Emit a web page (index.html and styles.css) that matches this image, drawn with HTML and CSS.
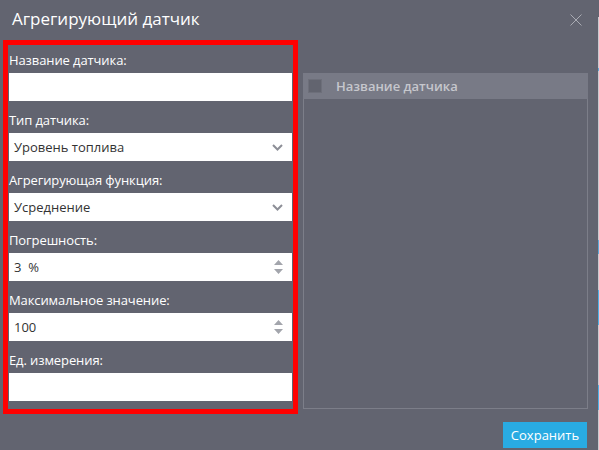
FILE: index.html
```html
<!DOCTYPE html>
<html lang="ru">
<head>
<meta charset="utf-8">
<link rel="stylesheet" href="styles.css">
</head>
<body>
<div class="page">
  <div class="modal">
    <div class="modal-header">
      <h1 class="modal-title">Агрегирующий датчик</h1>
      <span class="close">
        <svg width="12" height="12" viewBox="0 0 12 12"><path d="M0.5 0.5 L11.5 11.5 M11.5 0.5 L0.5 11.5" stroke="#a9abb3" stroke-width="1" fill="none"/></svg>
      </span>
    </div>
    <div class="modal-body">
      <div class="form-box">
        <div class="field">
          <label class="label">Название датчика:</label>
          <div class="input"></div>
        </div>
        <div class="field">
          <label class="label">Тип датчика:</label>
          <div class="input select"><span>Уровень топлива</span>
            <svg class="chev" width="11" height="7" viewBox="0 0 11 7"><path d="M1 1 L5.5 5.5 L10 1" stroke="#8d8f97" stroke-width="2" fill="none"/></svg>
          </div>
        </div>
        <div class="field">
          <label class="label">Агрегирующая функция:</label>
          <div class="input select"><span>Усреднение</span>
            <svg class="chev" width="11" height="7" viewBox="0 0 11 7"><path d="M1 1 L5.5 5.5 L10 1" stroke="#8d8f97" stroke-width="2" fill="none"/></svg>
          </div>
        </div>
        <div class="field">
          <label class="label">Погрешность:</label>
          <div class="input number"><span>3&nbsp;&nbsp;%</span>
            <svg class="spin" width="9" height="14" viewBox="0 0 9 14"><path d="M4.5 0 L9 5 L0 5 Z M0 9 L9 9 L4.5 14 Z" fill="#a3a5ac"/></svg>
          </div>
        </div>
        <div class="field">
          <label class="label">Максимальное значение:</label>
          <div class="input number"><span>100</span>
            <svg class="spin" width="9" height="14" viewBox="0 0 9 14"><path d="M4.5 0 L9 5 L0 5 Z M0 9 L9 9 L4.5 14 Z" fill="#a3a5ac"/></svg>
          </div>
        </div>
        <div class="field">
          <label class="label">Ед. измерения:</label>
          <div class="input"></div>
        </div>
      </div>
      <div class="list-panel">
        <div class="list-header">
          <span class="checkbox"></span>
          <span class="list-title">Название датчика</span>
        </div>
      </div>
    </div>
    <div class="modal-footer">
      <button class="btn-save">Сохранить</button>
    </div>
  </div>
  <div class="edge"></div>
</div>
</body>
</html>
```

FILE: styles.css
```css
* { box-sizing: border-box; }
html, body { margin: 0; padding: 0; }
body {
  font-family: "Open Sans", "Liberation Sans", sans-serif;
  background: #626470;
  width: 599px;
  height: 450px;
  overflow: hidden;
}
.page {
  display: flex;
  width: 599px;
  height: 450px;
}
.modal {
  width: 598px;
  height: 450px;
  background: #626470;
  display: flex;
  flex-direction: column;
}
.edge {
  width: 1px;
  height: 450px;
  background: linear-gradient(to bottom,
    #626470 0, #626470 17px,
    #c9cacf 17px, #c9cacf 68px,
    #5fa9d8 68px, #5fa9d8 71px,
    #c9cacf 71px, #c9cacf 240px,
    #5fa9d8 240px, #5fa9d8 254px,
    #c9cacf 254px, #c9cacf 290px,
    #4fb1e6 290px, #4fb1e6 325px,
    #c9cacf 325px, #c9cacf 385px,
    #4fb1e6 385px, #4fb1e6 410px,
    #c9cacf 410px);
}
.modal-header {
  height: 40px;
  display: flex;
  align-items: center;
  justify-content: space-between;
  padding: 0 16px 0 12px;
}
.modal-title {
  margin: 0;
  font-weight: normal;
  font-size: 17px;
  color: #ffffff;
  line-height: 24px;
  position: relative;
  top: -1px;
}
.close {
  display: flex;
  width: 12px;
  height: 12px;
}
.modal-body {
  display: flex;
  align-items: flex-start;
  padding-left: 3px;
}
.form-box {
  width: 295px;
  height: 374px;
  border: 5px solid #ff0000;
  padding: 7px 1px 8px 1px;
  display: flex;
  flex-direction: column;
  gap: 11px;
}
.field {
  display: flex;
  flex-direction: column;
}
.label {
  display: block;
  font-size: 13px;
  line-height: 16px;
  color: #ffffff;
  margin-bottom: 5px;
  letter-spacing: -0.1px;
}
.input {
  height: 28px;
  width: 283px;
  background: #ffffff;
  display: flex;
  align-items: center;
  justify-content: space-between;
  padding: 0 9px 0 5px;
  font-size: 13px;
  color: #333333;
}
.chev { display: block; }
.spin { display: block; }
.list-panel {
  margin-left: 5px;
  margin-top: 33px;
  width: 285px;
  height: 336px;
  border: 1px solid #7c7e89;
}
.list-header {
  height: 26px;
  background: #787a86;
  display: flex;
  align-items: center;
  margin: -1px -1px 0 -1px;
  padding-left: 5px;
}
.checkbox {
  width: 14px;
  height: 14px;
  background: #62646f;
  border: 1px solid #6d6f7a;
}
.list-title {
  margin-left: 14px;
  font-size: 13px;
  font-weight: 600;
  color: #c6c7cd;
}
.modal-footer {
  display: flex;
  justify-content: flex-end;
  padding: 8px 11px 0 0;
}
.btn-save {
  width: 84px;
  height: 26px;
  background: #29abe2;
  border: none;
  color: #ffffff;
  font-family: "Open Sans", "Liberation Sans", sans-serif;
  font-size: 13px;
  padding: 0;
}
```
